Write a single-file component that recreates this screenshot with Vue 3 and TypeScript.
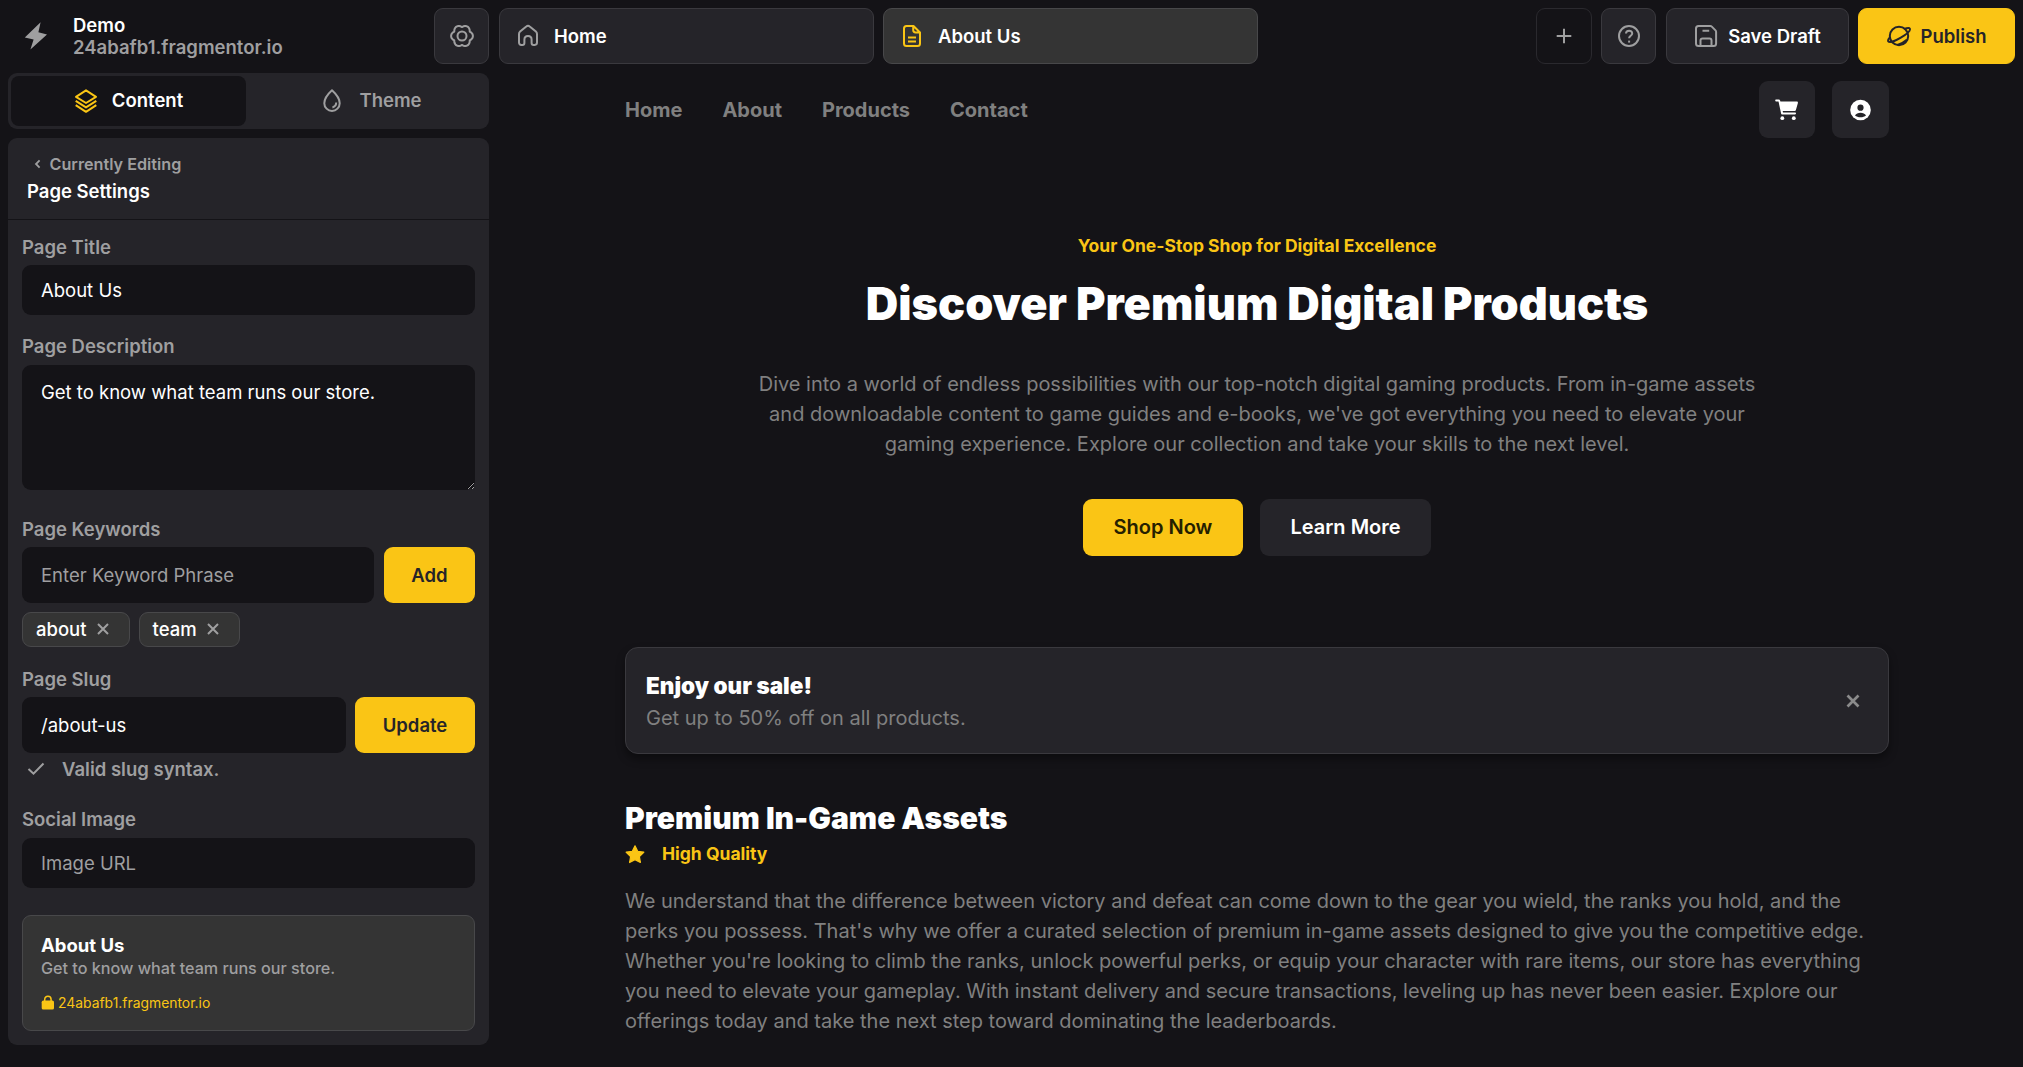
<script setup lang="ts">
import { ref } from 'vue'

const site = { name: 'Demo', domain: '24abafb1.fragmentor.io' }
const title = ref('About Us')
const description = ref('Get to know what team runs our store.')
const keyword = ref('')
const keywords = ref<string[]>(['about', 'team'])
const slug = ref('/about-us')
const image = ref('')

const links: string[] = ['Home', 'About', 'Products', 'Contact']

function addKeyword(): void {
  const k = keyword.value.trim()
  if (k) keywords.value.push(k)
  keyword.value = ''
}
function removeKeyword(i: number): void {
  keywords.value.splice(i, 1)
}

// Six-lobed outline of the settings icon
const gear: string = (() => {
  const pts: string[] = []
  for (let a = 0; a < 360; a += 5) {
    const t = (a * Math.PI) / 180
    const r = 8.9 + 2 * Math.abs(Math.cos(3 * t))
    pts.push(`${(12 + r * Math.cos(t)).toFixed(2)} ${(12 + r * Math.sin(t)).toFixed(2)}`)
  }
  return `M${pts.join('L')}Z`
})()
</script>

<template>
  <div class="app">
    <header class="topbar">
      <div class="brand">
        <svg class="bolt" width="24" height="28" viewBox="0 0 24 28"><path d="M16.6 0.3 0.8 15.6 9.6 17.6 6.4 27.6 23 12.4 14.4 10.2Z" fill="#9f9fa0" /></svg>
        <div class="brand-text">
          <div class="brand-name">{{ site.name }}</div>
          <div class="brand-domain">{{ site.domain }}</div>
        </div>
      </div>
      <button class="box settings">
        <svg class="ico" width="24" height="24" viewBox="0 0 24 24"><path :d="gear" /><circle cx="12" cy="12" r="4.500" /></svg>
      </button>
      <div class="box tab">
        <svg class="ico" width="24" height="24" viewBox="0 0 24 24"><path d="M3 9.9c0-.9.4-1.7 1.1-2.3l6.2-5.1c1-.9 2.400-.9 3.400 0l6.200 5.100c.7.6 1.100 1.400 1.100 2.300v8.700c0 1.400-.9 2.300-2.300 2.300h-1.100c-1.200 0-2-.8-2-2v-3.300c0-2.100-1.400-3.600-3.600-3.600s-3.600 1.500-3.600 3.600v3.300c0 1.200-.8 2-2 2H5.300C3.900 20.900 3 20 3 18.600Z" /></svg>
        <span>Home</span>
      </div>
      <div class="box tab active">
        <svg class="ico yellow" width="24" height="24" viewBox="0 0 24 24"><path d="M13.500 2H6.500C5 2 4 3 4 4.500v15C4 21 5 22 6.500 22h11c1.500 0 2.500-1 2.500-2.500V8.500ZM13.200 2.300V6c0 1.400 1 2.400 2.400 2.400h4M8 13.600h8M8 17.400h8" /></svg>
        <span>About Us</span>
      </div>
      <div class="spacer"></div>
      <button class="box square ghost">
        <svg class="ico" width="24" height="24" viewBox="0 0 24 24"><path d="M12 4.700v14.600M4.700 12h14.600" /></svg>
      </button>
      <button class="box square help">
        <svg class="ico" width="24" height="24" viewBox="0 0 24 24"><circle cx="12" cy="12" r="10" /><path d="M9 9.600c0-3.800 6.200-3.800 6.200-.2 0 2.300-3.100 2.500-3.100 4.900" /><path d="M12.100 16.600v2" /></svg>
      </button>
      <button class="box save">
        <svg class="ico" width="24" height="24" viewBox="0 0 24 24"><path d="M4.500 2h11.800c.6 0 1.100.2 1.500.6l3.700 3.800c.4.4.6.9.600 1.500v11.600c0 1.400-1 2.500-2.500 2.500h-15C3 22 2 21 2 19.500v-15C2 3 3 2 4.500 2ZM6.500 21.500v-5c0-1.200.8-2 2-2h7c1.200 0 2 .8 2 2v5M8.500 6.800h6.700" /></svg>
        <span>Save Draft</span>
      </button>
      <button class="box publish">
        <svg class="ico dark" width="24" height="24" viewBox="0 0 24 24"><circle cx="12" cy="12" r="9.200" /><path d="M17 5c3.300-1.100 5.300-1.400 5.800-.4 1 1.900-3.100 5.600-9 9.100C7.900 17.200 2.400 19 1.300 17.400c-.6-1 .1-2.500 1.700-4.300M19.800 15.800c-2.600 2.300-6 4.300-9.400 5.200" /></svg>
        <span>Publish</span>
      </button>
    </header>

    <div class="body">
      <aside class="sidebar">
        <div class="modes">
          <div class="mode on">
            <svg class="ico yellow layers" width="24" height="24" viewBox="0 0 24 24"><path d="M12 1.300 22 7.800 12 14 2 7.800ZM1.700 11.900 12 18.400 22.300 11.900M1.700 16.200 12 22.800 22.300 16.200" /></svg>
            <span>Content</span>
          </div>
          <div class="mode theme">
            <svg class="ico drop" width="24" height="26" viewBox="0 0 24 26"><path d="M12 2.300C7.200 6.700 4.300 11.200 4.300 15.200a7.700 7.700 0 0 0 15.400 0C19.700 11.200 16.800 6.700 12 2.300ZM16.200 14.600c0 2.400-1.500 4.300-3.800 4.800" /></svg>
            <span>Theme</span>
          </div>
        </div>

        <section class="panel">
          <div class="panel-head">
            <div class="crumb">
              <svg width="8" height="10" viewBox="0 0 8 10"><path d="M5.600 1.400 2 5l3.600 3.600" fill="none" stroke="#9f9fa0" stroke-width="1.800" /></svg>
              <span>Currently Editing</span>
            </div>
            <h3>Page Settings</h3>
          </div>
          <div class="form">
            <label>Page Title</label>
            <input v-model="title" class="field short" />
            <label class="l-desc">Page Description</label>
            <textarea v-model="description" class="field area"></textarea>
            <label class="l-key">Page Keywords</label>
            <div class="row">
              <input v-model="keyword" class="field" placeholder="Enter Keyword Phrase" />
              <button class="action add" @click="addKeyword">Add</button>
            </div>
            <div class="chips">
              <div v-for="(k, i) in keywords" :key="k" class="chip" @click="removeKeyword(i)">
                <span>{{ k }}</span>
                <svg width="12" height="12" viewBox="0 0 12 12"><path d="M1 1l10 10M11 1 1 11" fill="none" stroke="#9f9fa0" stroke-width="2" /></svg>
              </div>
            </div>
            <label class="l-slug">Page Slug</label>
            <div class="row">
              <input v-model="slug" class="field" />
              <button class="action update">Update</button>
            </div>
            <div class="valid">
              <svg width="18" height="14" viewBox="0 0 18 14"><path d="M1.500 7l5 4.700L16.500 1.500" fill="none" stroke="#9f9fa0" stroke-width="2" /></svg>
              <span>Valid slug syntax.</span>
            </div>
            <label class="l-social">Social Image</label>
            <input v-model="image" class="field short social" placeholder="Image URL" />
            <div class="card">
              <div class="card-title">{{ title }}</div>
              <div class="card-desc">{{ description }}</div>
              <div class="card-link">
                <svg width="14" height="15" viewBox="0 0 14 15"><path d="M3.700 6.500V4.400a3.200 3.200 0 0 1 6.400 0v2.100" fill="none" stroke="#fac515" stroke-width="1.500" /><rect x=".7" y="5.600" width="12.300" height="8.900" rx="1.600" fill="#fac515" /></svg>
                <span>{{ site.domain }}</span>
              </div>
            </div>
          </div>
        </section>
      </aside>

      <main class="page">
        <nav>
          <a v-for="l in links" :key="l">{{ l }}</a>
          <div class="spacer"></div>
          <button class="nav-btn">
            <svg width="24" height="24" viewBox="0 0 24 24" fill="#fff"><path d="M1.100 1.600h2.700c.7 0 1.200.4 1.400 1.100l.2.800h16.400c.8 0 1.300.7 1.100 1.500l-2 7c-.2.700-.8 1.100-1.500 1.100H7.700l.3 1.500h12c.6 0 1 .4 1 .9s-.4.900-1 .9H7.300c-.6 0-1.100-.4-1.200-1L3.500 3.500H1.100c-.5 0-.9-.4-.9-.9s.4-1 .9-1Z" /><circle cx="7.300" cy="20.200" r="1.900" /><circle cx="18.800" cy="20.200" r="1.900" /></svg>
          </button>
          <button class="nav-btn user">
            <svg width="24" height="24" viewBox="0 0 24 24"><circle cx="11.500" cy="12" r="10.300" fill="#fff" /><circle cx="11.500" cy="9.700" r="3.100" fill="#252429" /><path d="M6 17.400c1.100-1.700 3.100-2.600 5.500-2.600s4.400.9 5.500 2.600c-1.400 1.200-3.300 1.800-5.500 1.800s-4.100-.6-5.500-1.800Z" fill="#252429" /></svg>
          </button>
        </nav>

        <section class="hero">
          <div class="eyebrow">Your One-Stop Shop for Digital Excellence</div>
          <h1>Discover Premium Digital Products</h1>
          <p>
            Dive into a world of endless possibilities with our top-notch digital gaming products. From in-game assets<br />
            and downloadable content to game guides and e-books, we've got everything you need to elevate your<br />
            gaming experience. Explore our collection and take your skills to the next level.
          </p>
          <div class="cta">
            <button class="shop">Shop Now</button>
            <button class="learn">Learn More</button>
          </div>
        </section>

        <section class="alert">
          <div>
            <h4>Enjoy our sale!</h4>
            <div class="alert-sub">Get up to 50% off on all products.</div>
          </div>
          <svg width="14" height="14" viewBox="0 0 14 14"><path d="M1.500 1.500l11 11M12.500 1.500l-11 11" fill="none" stroke="#8b8b8b" stroke-width="2.700" /></svg>
        </section>

        <section class="assets">
          <h2>Premium In-Game Assets</h2>
          <div class="quality">
            <svg width="20" height="19" viewBox="0 0 20 19"><path d="M10 .8l2.700 5.500 6.100.9-4.400 4.300 1 6L10 14.700l-5.400 2.800 1-6L1.200 7.200l6.100-.9Z" fill="#fac515" stroke="#fac515" stroke-width="1.200" stroke-linejoin="round" /></svg>
            <span>High Quality</span>
          </div>
          <p>
            We understand that the difference between victory and defeat can come down to the gear you wield, the ranks you hold, and the<br />
            perks you possess. That's why we offer a curated selection of premium in-game assets designed to give you the competitive edge.<br />
            Whether you're looking to climb the ranks, unlock powerful perks, or equip your character with rare items, our store has everything<br />
            you need to elevate your gameplay. With instant delivery and secure transactions, leveling up has never been easier. Explore our<br />
            offerings today and take the next step toward dominating the leaderboards.
          </p>
        </section>
      </main>
    </div>
  </div>
</template>

<style>
body {
  background: #141317;
}
</style>

<style scoped>
.app {
  width: 2023px;
  height: 1067px;
  overflow: hidden;
  background: #141317;
  color: #fff;
  font-family: Inter, 'Liberation Sans', sans-serif;
  font-size: 18.5px;
  box-sizing: border-box;
}
.app * {
  box-sizing: border-box;
}
button,
input,
textarea {
  font: inherit;
  color: inherit;
  margin: 0;
  border: 0;
  outline: 0;
}
h1, h2, h3, h4, p {
  margin: 0;
}
svg {
  display: block;
  flex: none;
}
.spacer {
  flex: 1;
}
.ico {
  fill: none;
  stroke: #9f9fa0;
  stroke-width: 2;
  stroke-linejoin: round;
}
.ico.yellow {
  stroke: #fac515;
}
.ico.dark {
  stroke: #252429;
}
.topbar {
  display: flex;
  height: 73px;
  padding: 8px 8px 9px;
}
.brand {
  width: 426px;
  display: flex;
  padding-left: 16px;
}
.bolt {
  margin-top: 14px;
}
.brand-text {
  margin: 6px 0 0 25px;
  line-height: 22px;
}
.brand-name {
  font-weight: 600;
}
.brand-domain {
  font-weight: 600;
  color: #9f9fa0;
}
.box {
  height: 56px;
  border: 1px solid #3a393e;
  border-radius: 9px;
  background: #252429;
  display: flex;
  align-items: center;
  justify-content: center;
  padding: 0;
  font-weight: 600;
}
.settings {
  width: 55px;
  margin-right: 10px;
}
.tab {
  width: 375px;
  margin-right: 9px;
  justify-content: flex-start;
  padding-left: 16px;
}
.tab span {
  margin-left: 14px;
}
.tab.active {
  background: #343434;
  border-color: #48484a;
}
.square {
  width: 56px;
  margin-right: 9px;
}
.ghost {
  background: transparent;
  border-color: #2a292e;
}
.help {
  width: 55px;
  margin-right: 10px;
}
.save {
  width: 183px;
  margin-right: 9px;
}
.save span {
  margin-left: 10px;
}
.publish {
  width: 157px;
  background: #fac515;
  border-color: #fac515;
  color: #252429;
}
.publish span {
  margin-left: 10px;
}
.body {
  display: flex;
}
.sidebar {
  width: 481px;
  margin-left: 8px;
}
.modes {
  height: 56px;
  border-radius: 9px;
  background: #252429;
  padding: 3px;
  display: flex;
  font-weight: 600;
}
.mode {
  flex: 1;
  display: flex;
  align-items: center;
  justify-content: center;
  color: #9f9fa0;
  border-radius: 8px;
}
.mode.on {
  flex: none;
  width: 235px;
  background: #141317;
  color: #fff;
}
.mode span {
  margin-left: 15px;
  padding-bottom: 2px;
}
.mode.on span {
  margin-left: 14px;
}
.theme {
  padding-left: 10px;
}
.panel {
  margin-top: 9px;
  height: 907px;
  border-radius: 9px;
  background: #252429;
}
.panel-head {
  height: 82px;
  border-bottom: 1px solid #141317;
  padding: 16px 0 0 19px;
}
.crumb {
  display: flex;
  align-items: center;
  font-size: 16.2px;
  font-weight: 600;
  line-height: 20px;
  color: #9f9fa0;
  padding-left: 7px;
}
.crumb span {
  margin-left: 7.5px;
}
h3 {
  font-size: 18.5px;
  font-weight: 600;
  line-height: 24px;
  margin-top: 5px;
}
.form {
  padding: 16px 14px 0;
  display: flex;
  flex-direction: column;
}
label {
  line-height: 22px;
  font-weight: 600;
  color: #9f9fa0;
  margin-bottom: 7px;
}
.field {
  flex: 1;
  min-width: 0;
  height: 56px;
  background: #141317;
  border-radius: 9px;
  padding: 0 19px;
  font-weight: 400;
}
.field::placeholder {
  color: #9f9fa0;
}
.field.short {
  flex: none;
  height: 50px;
}
.field.area {
  flex: none;
  height: 125px;
  padding: 14px 19px;
  line-height: 27px;
}
.l-desc {
  margin-top: 20px;
  margin-bottom: 8px;
}
.l-key {
  margin-top: 28px;
}
.row {
  display: flex;
}
.action {
  height: 56px;
  border-radius: 9px;
  background: #fac515;
  color: #252429;
  font-weight: 600;
  padding: 0;
}
.add {
  width: 91px;
  margin-left: 10px;
}
.update {
  width: 120px;
  margin-left: 9px;
}
.chips {
  display: flex;
  margin-top: 9px;
  gap: 9px;
}
.chip {
  height: 35px;
  border: 1px solid #48484a;
  border-radius: 9px;
  background: #343434;
  display: flex;
  align-items: center;
  padding: 0 20px 1px 13px;
  font-weight: 500;
}
.chip svg {
  margin-left: 10px;
}
.l-slug {
  margin-top: 21px;
}
.valid {
  height: 24px;
  margin-top: 4px;
  padding-left: 5px;
  display: flex;
  align-items: center;
  font-weight: 600;
  color: #9f9fa0;
}
.valid span {
  margin-left: 17px;
}
.l-social {
  margin-top: 27px;
  margin-bottom: 8px;
}
.card {
  margin-top: 27px;
  height: 116px;
  border: 1px solid #48484a;
  border-radius: 9px;
  background: #343434;
  padding: 17px 18px 0;
}
.card-title {
  font-weight: 700;
  line-height: 24px;
}
.card-desc {
  font-size: 16.15px;
  font-weight: 500;
  line-height: 22px;
  color: #9f9fa0;
}
.card-link {
  margin-top: 13px;
  height: 20px;
  display: flex;
  align-items: center;
  font-size: 13.9px;
  color: #fac515;
}
.card-link span {
  margin-left: 3px;
  padding-top: 1px;
}
.page {
  width: 1264px;
  margin-left: 136px;
  padding-top: 8px;
}
nav {
  display: flex;
  align-items: center;
  height: 57px;
}
nav a {
  font-size: 20px;
  font-weight: 700;
  color: #808080;
  margin-right: 40px;
}
.nav-btn {
  width: 56px;
  height: 57px;
  border-radius: 9px;
  background: #252429;
  padding: 0;
  display: flex;
  align-items: center;
  justify-content: center;
}
.user {
  width: 57px;
  margin-left: 17px;
}
.hero {
  text-align: center;
  padding-top: 95px;
}
.eyebrow {
  font-size: 17.5px;
  font-weight: 700;
  color: #fac515;
  line-height: 26px;
}
h1 {
  margin-top: 18px;
  font-size: 45px;
  font-weight: 900;
  line-height: 54px;
}
.hero p {
  margin-top: 38px;
}
p {
  font-size: 20px;
  line-height: 30px;
  color: #808080;
  white-space: nowrap;
}
.cta {
  display: flex;
  justify-content: center;
  margin-top: 40px;
  gap: 17px;
}
.cta button {
  height: 57px;
  border-radius: 9px;
  font-size: 20px;
  font-weight: 600;
  padding: 0 0 2px;
}
.shop {
  width: 160px;
  background: #fac515;
  color: #252000;
}
.learn {
  width: 171px;
  background: #252429;
  color: #fff;
}
.alert {
  margin-top: 91px;
  height: 107px;
  border: 1px solid #3a393e;
  border-radius: 13px;
  background: #252429;
  box-shadow: 0 5px 9px rgba(0, 0, 0, 0.4);
  display: flex;
  align-items: center;
  justify-content: space-between;
  padding: 0 28px 0 20px;
}
h4 {
  font-size: 22.5px;
  font-weight: 900;
  line-height: 34px;
}
.alert-sub {
  font-size: 20px;
  line-height: 30px;
  color: #808080;
}
.assets {
  padding-top: 44px;
}
h2 {
  font-size: 30px;
  font-weight: 900;
  line-height: 40px;
}
.quality {
  display: flex;
  align-items: center;
  height: 26px;
  margin-top: 3px;
  font-size: 17.5px;
  font-weight: 700;
  color: #fac515;
}
.quality span {
  margin-left: 17px;
  padding-bottom: 2px;
}
.assets p {
  margin-top: 19px;
}
</style>
